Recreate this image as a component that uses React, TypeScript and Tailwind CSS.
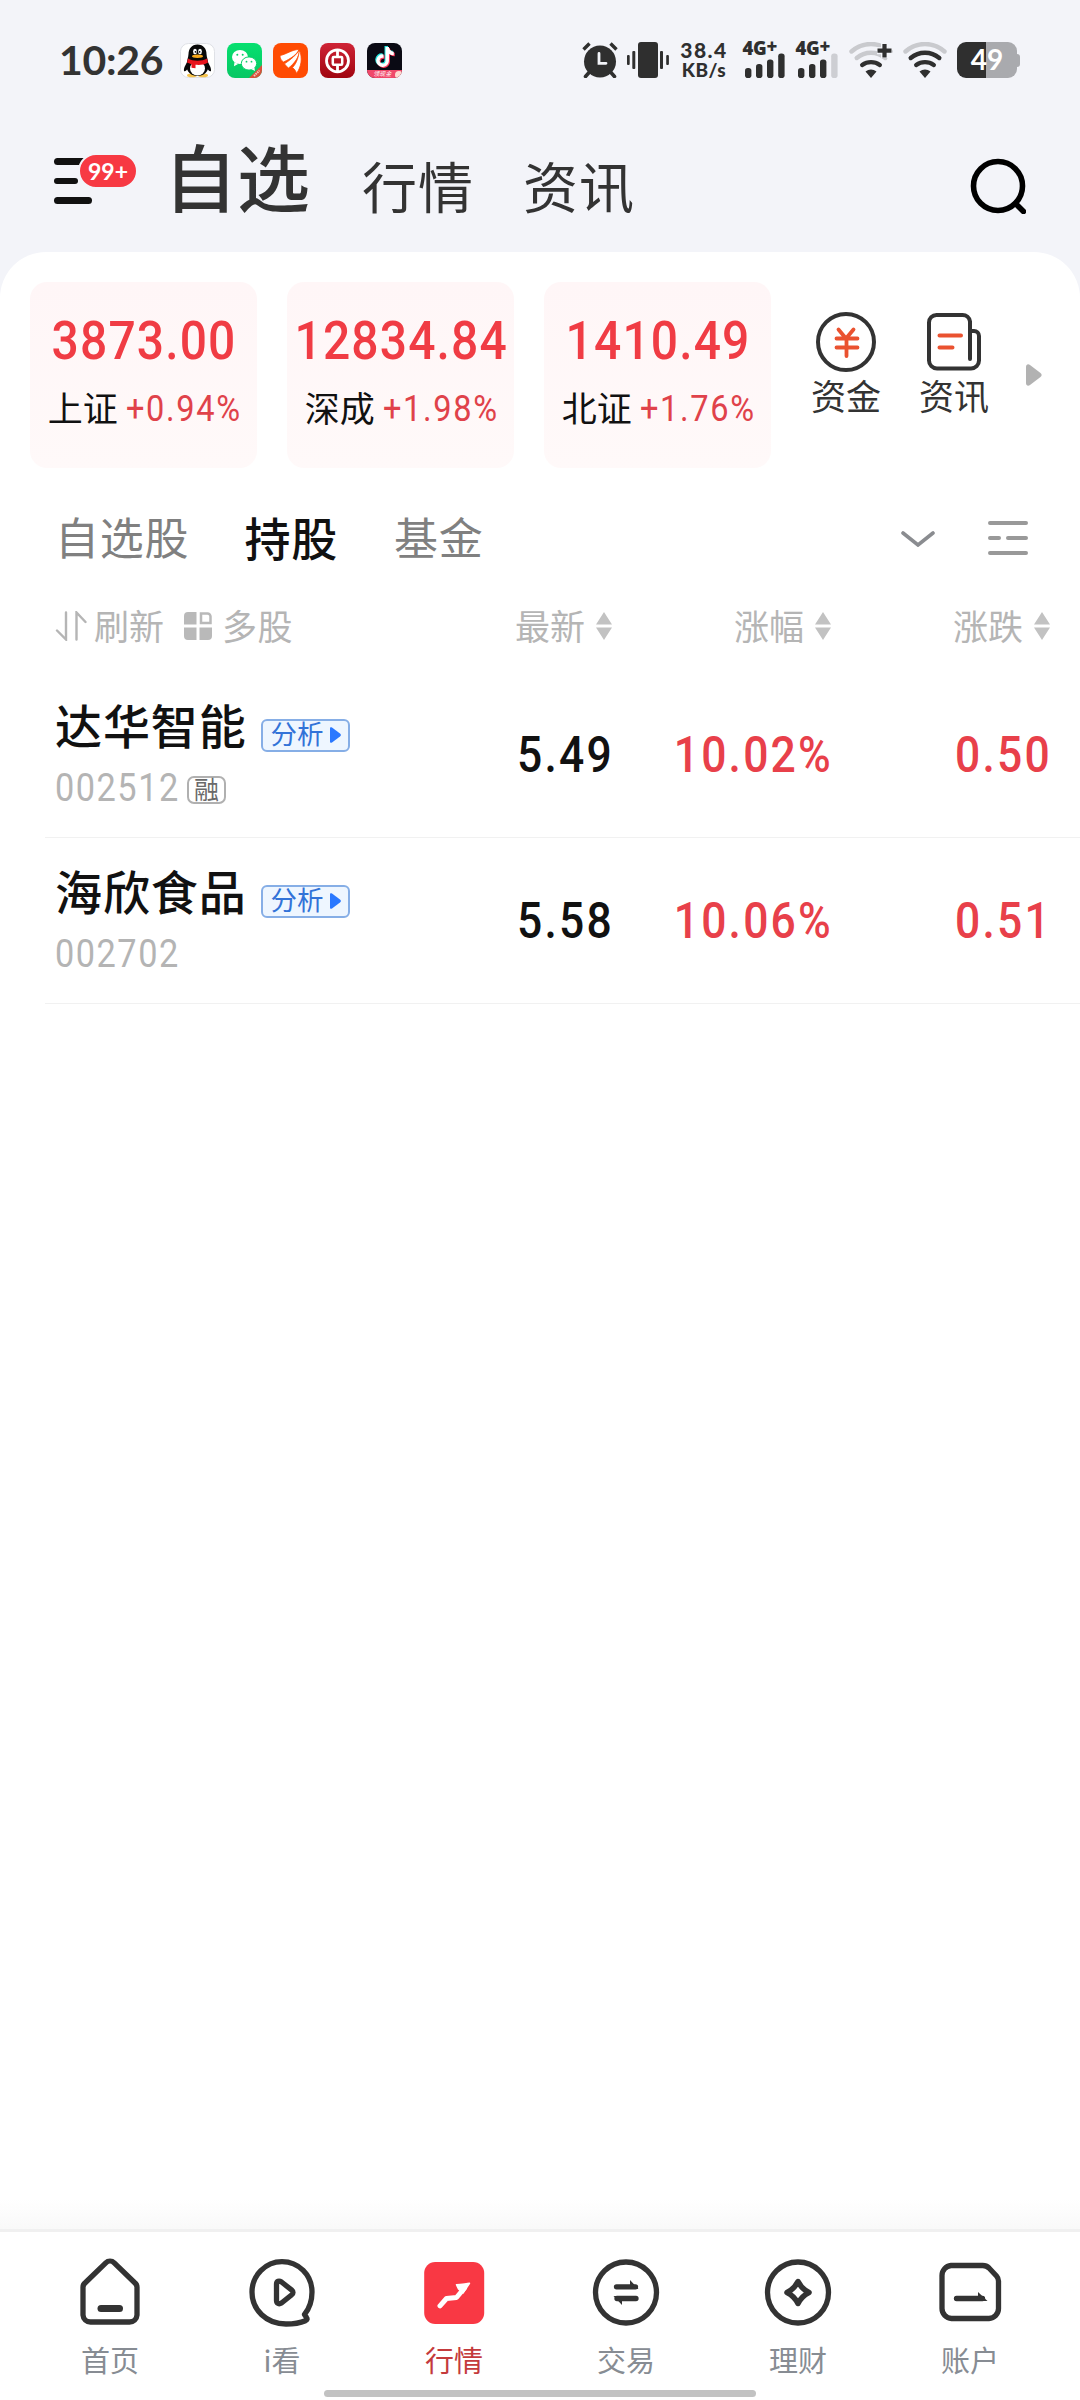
import React from 'react';
import clsx from 'clsx';
import { FaTiktok } from 'react-icons/fa6';

interface IndexQuote {
  name: string;
  value: string;
  change: string;
}

interface Stock {
  name: string;
  code: string;
  margin?: boolean;
  price: string;
  percent: string;
  change: string;
}

const indexes: IndexQuote[] = [
  { name: '上证', value: '3873.00', change: '+0.94%' },
  { name: '深成', value: '12834.84', change: '+1.98%' },
  { name: '北证', value: '1410.49', change: '+1.76%' },
];

const stocks: Stock[] = [
  { name: '达华智能', code: '002512', margin: true, price: '5.49', percent: '10.02%', change: '0.50' },
  { name: '海欣食品', code: '002702', price: '5.58', percent: '10.06%', change: '0.51' },
];

const columns = ['最新', '涨幅', '涨跌'];

/* Narrow figures used for every quote on the page */
function Num({ children, className }: { children: React.ReactNode; className?: string }) {
  return (
    <span className={clsx("inline-block scale-x-[0.88] whitespace-nowrap font-['Roboto',sans-serif] leading-none", className)}>
      {children}
    </span>
  );
}

/* ---------- status bar ---------- */

function QqIcon() {
  return (
    <svg viewBox="0 0 35 35" className="size-[35px]">
      <rect x="0.5" y="0.5" width="34" height="34" rx="8" fill="#fff" stroke="#dfe1e6" />
      <ellipse cx="12" cy="32.4" rx="5" ry="1.8" fill="#f5c34d" />
      <ellipse cx="23" cy="32.4" rx="5" ry="1.8" fill="#f5c34d" />
      <path d="M9 17c-3 3.500-5.500 8-5 11 1 1 2.500-.5 3.500-2M26 17c3 3.500 5.500 8 5 11-1 1-2.500-.5-3.500-2" fill="#080808" />
      <path d="M17.500 1.500c-6 0-9 4.500-9 9.500 0 3-2 7-2 12 0 6 5 10 11 10s11-4 11-10c0-5-2-9-2-12 0-5-3-9.500-9-9.500Z" fill="#080808" />
      <ellipse cx="17.500" cy="25.500" rx="7.500" ry="7" fill="#fff" />
      <path d="M8 15.500c5 3 14 3 19 0l1 4c-4 2.500-8 2.500-12.500 2.300v3.500l-4-.5v-3.500L7 19.500Z" fill="#e8131c" />
      <ellipse cx="17.500" cy="13.300" rx="5.500" ry="1.700" fill="#f7a81b" />
      <ellipse cx="15" cy="8.500" rx="1.900" ry="2.700" fill="#fff" />
      <ellipse cx="20" cy="8.500" rx="1.900" ry="2.700" fill="#fff" />
      <circle cx="15.500" cy="8.800" r="0.900" fill="#080808" />
      <circle cx="19.600" cy="8.800" r="0.900" fill="#080808" />
    </svg>
  );
}

function WechatIcon() {
  return (
    <svg viewBox="0 0 35 35" className="size-[35px]">
      <defs>
        <linearGradient id="wx" x1="0" y1="0" x2="0" y2="1">
          <stop offset="0" stopColor="#06e070" />
          <stop offset="1" stopColor="#07c764" />
        </linearGradient>
        <clipPath id="wxc"><rect width="35" height="35" rx="8" /></clipPath>
      </defs>
      <g clipPath="url(#wxc)">
        <rect width="35" height="35" fill="url(#wx)" />
        <path d="M35 22v13H22Z" fill="#d9503c" />
        <path d="m27 33 5.500-5.500" stroke="#f3c9bf" strokeWidth="2" strokeDasharray="1.500 .8" />
        <path d="M7.500 19 7 23.200l4-2.200Z" fill="#fff" />
        <ellipse cx="13" cy="14" rx="8" ry="7" fill="#fff" />
        <ellipse cx="22" cy="20.500" rx="7.700" ry="6.600" fill="#fff" stroke="#08d069" strokeWidth="1" />
        <path d="m24.500 26.300 3.500 1.800-.7-3.500Z" fill="#fff" />
        <circle cx="10.300" cy="11.800" r="1" fill="#08d069" />
        <circle cx="15.700" cy="11.800" r="1" fill="#08d069" />
        <circle cx="19.500" cy="18.700" r="0.900" fill="#08d069" />
        <circle cx="24.500" cy="18.700" r="0.900" fill="#08d069" />
      </g>
    </svg>
  );
}

function BrokerIcon() {
  return (
    <svg viewBox="0 0 35 35" className="size-[35px]">
      <rect width="35" height="35" rx="8" fill="#ff4b03" />
      <g fill="#fff" stroke="#ff4b03" strokeWidth="0.800">
        <path d="M7 12.500C13 11.500 19 6.500 26 6.500c-2 5-8 9-15.500 12.500C8 17.500 7 15 7 12.500Z" />
        <path d="M11.500 20.800C18 16.500 23 12 26.500 7c0 6.500-5 13.500-11 18-1.500-1-3-2.500-4-4.200Z" />
        <path d="M19.500 24.500c4.500-4.500 6-11 7-17.500 3 8 2 16.500-3 23.500-.5-2.200-2-4.500-4-6Z" />
      </g>
    </svg>
  );
}

function BankIcon() {
  return (
    <svg viewBox="0 0 35 35" className="size-[35px]" fill="none" stroke="#fff">
      <defs>
        <linearGradient id="boc" x1="0" y1="0" x2="0" y2="1">
          <stop offset="0" stopColor="#cf2336" />
          <stop offset="1" stopColor="#a00510" />
        </linearGradient>
      </defs>
      <rect width="35" height="35" rx="8" fill="url(#boc)" stroke="none" />
      <circle cx="17.500" cy="17.800" r="11" strokeWidth="2.800" />
      <path d="M17.500 6.500v7M17.500 22.500v7" strokeWidth="2.800" />
      <rect x="12.800" y="14" width="9.400" height="7.800" rx="1" strokeWidth="2.500" />
    </svg>
  );
}

function DouyinIcon() {
  return (
    <div className="relative size-[35px] overflow-hidden rounded-[8px] bg-[#0a0a14]">
      <FaTiktok className="absolute left-[7px] top-[3px] size-[20px] text-[#25e6e0]" />
      <FaTiktok className="absolute left-[9px] top-[5px] size-[20px] text-[#fb3b5c]" />
      <FaTiktok className="absolute left-[8px] top-[4px] size-[20px] text-white" />
      <div className="absolute inset-x-0 bottom-0 flex h-[8px] items-center justify-center bg-[#f0486a] pr-1 text-[6px] italic leading-none text-white">
        领现金
      </div>
      <div className="absolute -bottom-px -right-px size-[8px] rounded-full bg-[#ffd9d0]" />
    </div>
  );
}

function AlarmIcon() {
  return (
    <svg viewBox="0 0 36 36" className="h-9 w-9" fill="none" strokeLinecap="round">
      <circle cx="18" cy="19.500" r="16" fill="#2f2f2f" />
      <path d="m1.500 7.500 6-6M34.500 7.500l-6-6" stroke="#2f2f2f" strokeWidth="3.400" strokeLinecap="butt" />
      <path d="m7.500 30-4 4.500M28.500 30l4 4.500" stroke="#2f2f2f" strokeWidth="3.600" />
      <path d="M17 11.500v9.800h7" stroke="#f3f4f9" strokeWidth="2.800" />
    </svg>
  );
}

function VibrateIcon() {
  return (
    <svg viewBox="0 0 42 36" className="h-9 w-[42px]" fill="#2f2f2f">
      <rect x="11" width="20" height="36" rx="3" />
      <rect y="13" width="2.700" height="10" rx="1" />
      <rect x="5.300" y="9" width="3" height="18" rx="1" />
      <rect x="33" y="9" width="3" height="18" rx="1" />
      <rect x="39.200" y="13" width="2.700" height="10" rx="1" />
    </svg>
  );
}

function Signal({ weak }: { weak?: boolean }) {
  return (
    <div className="flex w-[42px] flex-col">
      <span className="flex h-[11px] whitespace-nowrap font-['Open_Sans',sans-serif] text-[18.500px] font-extrabold leading-[12px] tracking-[-0.3px] text-[#2f2f2f]">
        4G<span className="-mt-[2px]">+</span>
      </span>
      <svg viewBox="0 0 42 25" className="h-[25px] w-[42px]" fill="#2f2f2f">
        <rect x="2" y="15" width="6.400" height="10" rx="2.800" />
        <rect x="13" y="11" width="6.400" height="14" rx="2.800" />
        <rect x="24" y="6.500" width="6.400" height="18.500" rx="2.800" />
        <rect x="35.200" y="0.500" width="6.400" height="24.500" rx="2.800" fill={weak ? '#cdced3' : '#2f2f2f'} />
      </svg>
    </div>
  );
}

function Wifi({ plus }: { plus?: boolean }) {
  const faint = '#c9cace';
  return (
    <svg viewBox="0 0 44 36" className="h-9 w-11" fill="none" stroke="#2f2f2f" strokeWidth="4.400" strokeLinecap="round">
      <path d="M2.500 9.500C13.500-.5 30.500-.5 41.500 9.500" stroke={faint} />
      <path d="M7.700 16c8.300-7 20.300-7 28.600 0" stroke={plus ? faint : '#2f2f2f'} />
      <path d="M13.200 23c5.300-3.800 12.300-3.800 17.600 0" />
      <path d="M16.500 29.500c3.500-2.700 7.500-2.700 11 0L22 36Z" fill="#2f2f2f" stroke="none" />
      {plus && (
        <>
          <path d="M35.500 1v15M28 8.700h15" stroke="#f3f4f9" strokeWidth="7" strokeLinecap="butt" />
          <path d="M35.500 2v13.500M28.500 8.700h14" strokeWidth="4.200" strokeLinecap="butt" />
        </>
      )}
    </svg>
  );
}

function Battery() {
  return (
    <div className="flex items-center">
      <div className="flex h-9 w-[60px] items-center justify-center overflow-hidden rounded-[9px] bg-linear-to-r from-[#2f2f2f] from-[48%] to-[#a9aaae] to-[48%] pb-[2px] font-['Lato',sans-serif] text-[28px] font-bold leading-none text-white">
        49
      </div>
      <div className="h-[13px] w-[3px] rounded-r-[3px] bg-[#a9aaae]" />
    </div>
  );
}

function StatusBar() {
  return (
    <div className="flex h-[120px] items-center pl-[59px] pr-[60px]">
      <span className="w-[121px] pb-px font-['Lato',sans-serif] text-[41px] font-bold leading-none tracking-[-0.300px] text-[#333]">10:26</span>
      <div className="flex gap-[11.700px]">
        <QqIcon />
        <WechatIcon />
        <BrokerIcon />
        <BankIcon />
        <DouyinIcon />
      </div>
      <div className="ml-auto flex items-center">
        <AlarmIcon />
        <div className="ml-[9px]"><VibrateIcon /></div>
        <div className="ml-[11px] flex w-[49px] flex-col items-center font-['Lato',sans-serif] font-black leading-[20px] text-[#2f2f2f]">
          <span className="text-[21px] tracking-[1.500px]">38.4</span>
          <span className="text-[19px] tracking-[0.500px]">KB/s</span>
        </div>
        <div className="ml-[14px]"><Signal /></div>
        <div className="ml-[11px]"><Signal weak /></div>
        <div className="ml-[11.500px]"><Wifi plus /></div>
        <div className="ml-[10px]"><Wifi /></div>
        <div className="ml-[10px]"><Battery /></div>
      </div>
    </div>
  );
}

/* ---------- header ---------- */

function Header() {
  return (
    <header className="flex h-[132px] items-start pl-[54px] pr-[54px] text-[#333]">
      <div className="relative mt-[38px] h-[48px] w-[110px]">
        <div className="flex flex-col gap-[13px]">
          <div className="h-[6.500px] w-[38px] rounded-full bg-[#111]" />
          <div className="h-[6.500px] w-[24px] rounded-full bg-[#111]" />
          <div className="h-[6.500px] w-[38px] rounded-full bg-[#111]" />
        </div>
        <span className="absolute left-[24px] top-[-5px] flex h-[36px] w-[60px] items-center justify-center rounded-full border-[2px] border-[#f3f4f9] bg-[#f73943] font-['Lato',sans-serif] text-[23px] font-bold leading-none text-white">
          99+
        </span>
      </div>
      <h1 className="mt-[18px] w-[150px] whitespace-nowrap text-[73px] font-medium leading-[72px]">自选</h1>
      <span className="ml-[48px] mt-[36px] text-[55px] leading-[56px] tracking-[1px]">行情</span>
      <span className="ml-[49px] mt-[36px] text-[55px] leading-[56px] tracking-[1px]">资讯</span>
      <svg viewBox="0 0 56 56" className="ml-auto mt-[38px] size-14" fill="none" stroke="#000" strokeWidth="5.600" strokeLinecap="round">
        <circle cx="28" cy="28" r="24.500" />
        <path d="m45.500 45.500 8 8" />
      </svg>
    </header>
  );
}

/* ---------- indexes ---------- */

function IndexCard({ quote }: { quote: IndexQuote }) {
  return (
    <div className="flex h-[186px] w-[227px] flex-col items-center rounded-[17px] bg-linear-to-b from-[#fff6f7] to-[#fff9f9] pt-[31px]">
      <Num className="-mr-[2px] text-[54.500px] font-medium tracking-[1.300px] text-[#f03c44]">{quote.value}</Num>
      <div className="mt-[18.500px] flex items-center whitespace-nowrap">
        <span className="text-[35px] leading-[40px] text-[#111]">{quote.name}</span>
        <Num className="-mr-[10px] mt-[4px] text-[37px] tracking-[1.900px] text-[#e0424a]">{quote.change}</Num>
      </div>
    </div>
  );
}

function FundsIcon() {
  return (
    <svg viewBox="0 0 60 60" className="size-[60px]" fill="none" strokeWidth="4" strokeLinecap="round">
      <circle cx="30" cy="30" r="28" stroke="#333" />
      <path d="m22.500 17.500 7.500 9 7.500-9M20.500 26.500h21M20.500 35.500h21M30.500 27v17" stroke="#ea5230" strokeWidth="3.800" />
    </svg>
  );
}

function NewsIcon() {
  return (
    <svg viewBox="0 0 60 60" className="size-[60px]" fill="none" strokeWidth="4" strokeLinecap="round">
      <path d="M46 47V9.500A7.500 7.500 0 0 0 38.500 3h-26A7.500 7.500 0 0 0 5 10.500v38a8 8 0 0 0 8 8h34a8 8 0 0 0 8-8V24a5 5 0 0 0-5-5h-3" stroke="#333" />
      <path d="M15.500 23.500h21.500M15.500 35.500h13" stroke="#ea5230" />
    </svg>
  );
}

function Indexes() {
  return (
    <div className="flex pl-[30px] pt-[30px]">
      <div className="flex gap-[30px]">
        {indexes.map((q) => (
          <IndexCard key={q.name} quote={q} />
        ))}
      </div>
      <div className="ml-[38px] flex gap-[34px] pt-[30px] text-[35px] leading-[36px] text-[#333]">
        <div className="flex w-[74px] flex-col items-center gap-[5px]">
          <FundsIcon />
          <span>资金</span>
        </div>
        <div className="flex w-[74px] flex-col items-center gap-[5px]">
          <NewsIcon />
          <span>资讯</span>
        </div>
      </div>
      <svg viewBox="0 0 16 22" className="ml-[35px] mt-[82px] h-[22px] w-4" fill="#b2b2b2">
        <path d="M0 3c0-2.500 2-3.500 4-2l10.500 8c1.500 1.200 1.500 2.800 0 4L4 21c-2 1.500-4 .5-4-2Z" />
      </svg>
    </div>
  );
}

/* ---------- watch list ---------- */

function Tabs() {
  return (
    <div className="mt-[42px] flex h-[56px] items-center pl-[55px] pr-[52px] text-[44px] leading-none tracking-[0.800px] text-[#808080]">
      <span className="-mt-[4px]">自选股</span>
      <span className="-mt-[4px] ml-[55px] text-[46px] font-medium text-[#111]">持股</span>
      <span className="-mt-[4px] ml-[56px]">基金</span>
      <svg viewBox="0 0 34 16" className="ml-auto mt-[2px] h-4 w-[34px]" fill="none" stroke="#8a8c90" strokeWidth="3.600" strokeLinecap="round">
        <path d="m2 2 15 12L32 2" />
      </svg>
      <svg viewBox="0 0 40 36" className="ml-[53px] h-9 w-10" fill="none" stroke="#999" strokeWidth="4" strokeLinecap="round">
        <path d="M2 3h36M2 18h9M20 18h18M2 33h36" />
      </svg>
    </div>
  );
}

function SortIcon() {
  return (
    <svg viewBox="0 0 16 28" className="mt-[3px] h-7 w-4" fill="#c2c2c2">
      <path d="m8 0 8 12.500H0ZM8 28l8-12.500H0Z" />
    </svg>
  );
}

function TableHead() {
  return (
    <div className="mt-[28px] grid h-[60px] grid-cols-[1fr_219px_219px_219px] items-center pl-[55px] pr-[30px] text-[35px] leading-none text-[#b5b5b5]">
      <div className="flex items-center">
        <svg viewBox="0 0 32 30" className="mt-[3px] h-[30px] w-8" fill="none" stroke="#b5b5b5" strokeWidth="2.400" strokeLinecap="round">
          <path d="M2 19.500 11 28.500V1.500M21.500 28.500V1.500L30.500 11" />
        </svg>
        <span className="ml-[7px]">刷新</span>
        <svg viewBox="0 0 28 28" className="ml-[20px] mt-[3px] h-7 w-7" fill="#b9b9b9">
          <path d="M4 0h8.500v12.500H0V4a4 4 0 0 1 4-4ZM0 15.500h12.500V28H4a4 4 0 0 1-4-4ZM15.500 15.500H28V24a4 4 0 0 1-4 4h-8.500Z" />
          <path d="M17 1.500h6.500a3 3 0 0 1 3 3V11H17Z" fill="none" stroke="#b9b9b9" strokeWidth="2.500" />
        </svg>
        <span className="ml-[10px] tracking-[0.500px]">多股</span>
      </div>
      {columns.map((c) => (
        <div key={c} className="flex items-center justify-end gap-[11px]">
          <span>{c}</span>
          <SortIcon />
        </div>
      ))}
    </div>
  );
}

function StockRow({ stock }: { stock: Stock }) {
  const figure = '-mr-[2px] mt-px origin-right text-right text-[50.500px] font-medium tracking-[2.500px]';
  return (
    <div className="ml-[45px] grid h-[166px] grid-cols-[1fr_219px_219px_219px] items-center border-b border-[#f1f1f1] pl-[10px] pr-[30px]">
      <div className="pb-[5px]">
        <div className="flex items-center whitespace-nowrap">
          <span className="text-[47px] font-medium leading-[56px] tracking-[0.900px] text-[#111]">{stock.name}</span>
          <span className="ml-[14px] mt-[22px] flex h-[33px] w-[89px] items-center gap-[6px] rounded-[6px] border-2 border-[#86aee6] bg-[#eef6ff] pl-[8px] text-[26.500px] leading-none text-[#3273d8]">
            <span className="-mt-[3px]">分析</span>
            <svg viewBox="0 0 11 16" className="h-4 w-[11px]" fill="#2a78ff">
              <path d="M0 1.500C0 0 1 0 2 .5l8 6c1.200 1 1.200 2 0 3l-8 6c-1 .5-2 .5-2-1Z" />
            </svg>
          </span>
        </div>
        <div className="mt-[16px] flex h-[40px] items-center">
          <Num className="w-[130px] origin-left text-[39px] tracking-[1.700px] text-[#b4b4b4]">{stock.code}</Num>
          {stock.margin && (
            <span className="ml-[2px] mt-[4px] flex h-[28px] w-[39px] items-center justify-center rounded-[7px] border-2 border-[#b0b0b0] pb-[3px] text-[25px] leading-none text-[#6a6a6a]">
              融
            </span>
          )}
        </div>
      </div>
      <Num className={clsx(figure, 'text-[#111]')}>{stock.price}</Num>
      <Num className={clsx(figure, 'text-[#e8404a]')}>{stock.percent}</Num>
      <Num className={clsx(figure, 'text-[#e8404a]')}>{stock.change}</Num>
    </div>
  );
}

/* ---------- bottom navigation ---------- */

const navItems = [
  {
    label: '首页',
    icon: (
      <>
        <path d="M29.800 4.800a6 6 0 0 1 8.400 0L58.500 24.500a6 6 0 0 1 2.500 5V57a7.500 7.500 0 0 1-7.500 7h-39A7.500 7.500 0 0 1 7 57V29.500a6 6 0 0 1 2.500-5Z" />
        <path d="M25 50.500h18.500" strokeWidth="7" />
      </>
    ),
  },
  {
    label: 'i看',
    icon: (
      <>
        <path d="M56.500 56.500C61 51 64 43 64 34 64 17 50.500 3.700 34 3.700S4 17.500 4 34c0 18 14.500 32 34 32 7 0 14-1 19.500-3.300 1.700-.8 2-1.800 1-3.200Z" />
        <path d="M28.500 26v16.500c0 3 2.500 4 5 2.500L43.500 37c2-1.500 2-3.500 0-5.200L33.500 24c-2.500-1.700-5-1-5 2Z" />
      </>
    ),
  },
  {
    label: '行情',
    icon: (
      <>
        <rect x="4.200" y="4" width="60" height="62" rx="11" fill="#f93844" stroke="none" />
        <path d="M20 47.800 26.500 40.500 36.500 39.500 44.500 30" stroke="#fff" strokeWidth="5" />
        <path d="M36.500 26.800c4.500-.2 8.500-1 13-1.500L43 35l-4.500-4Z" fill="#fff" stroke="#fff" strokeWidth="1.500" />
      </>
    ),
  },
  {
    label: '交易',
    icon: (
      <>
        <circle cx="34" cy="34.500" r="30.500" />
        <path d="M24.500 28.800h19M25 40.500h19" />
        <path d="m38 22 8.500 9H38ZM30 47l-8.500-9H30Z" fill="#333" stroke="none" />
      </>
    ),
  },
  {
    label: '理财',
    icon: (
      <>
        <circle cx="34" cy="34.500" r="30.500" />
        <path d="M34 23.500c2.500 5 6 8.500 11 11-5 2.500-8.500 6-11 11-2.500-5-6-8.500-11-11 5-2.500 8.500-6 11-11Z" strokeWidth="5.500" />
      </>
    ),
  },
  {
    label: '账户',
    icon: (
      <>
        <path d="M15 7.500h31.500a9 9 0 0 1 6.500 2.500l7.500 8a8 8 0 0 1 2 5v27.500A10 10 0 0 1 53 60.500H15.500A10 10 0 0 1 6 50.500v-33a10 10 0 0 1 9-10Z" />
        <path d="M20.500 40.500h26" />
        <path d="m42 34 9.500 9H42Z" fill="#333" stroke="none" />
      </>
    ),
  },
];

function BottomNav() {
  return (
    <div>
      <div className="h-[30px] bg-linear-to-b from-white to-[#f9f9f9]" />
      <nav className="flex h-[171px] flex-col items-center border-t-[3px] border-[#f0f0f0] bg-white">
        <div className="flex w-full justify-center">
          {navItems.map((item) => (
            <div key={item.label} className="flex w-[172px] flex-col items-center pt-[26px]">
              <svg viewBox="0 0 68 70" className="h-[70px] w-[68px]" fill="none" stroke="#333" strokeWidth="5.300" strokeLinecap="round" strokeLinejoin="round">
                {item.icon}
              </svg>
              <span
                className={clsx(
                  'mt-[15px] text-[29px] leading-[32px]',
                  item.label === '行情' ? 'text-[#c43a3c]' : 'text-[#878c93]'
                )}
              >
                {item.label}
              </span>
            </div>
          ))}
        </div>
        <div className="mt-[15px] h-[7px] w-[432px] rounded-full bg-[#c2c2c2]" />
      </nav>
    </div>
  );
}

export default function App() {
  return (
    <div className="flex h-[2400px] w-[1080px] flex-col overflow-hidden bg-[#f3f4f9] font-['Noto_Sans_CJK_SC',sans-serif]">
      <StatusBar />
      <Header />
      <main className="flex-1 rounded-t-[46px] bg-white">
        <Indexes />
        <Tabs />
        <TableHead />
        <div className="mt-[18px]">
          {stocks.map((s) => (
            <StockRow key={s.code} stock={s} />
          ))}
        </div>
      </main>
      <BottomNav />
    </div>
  );
}
